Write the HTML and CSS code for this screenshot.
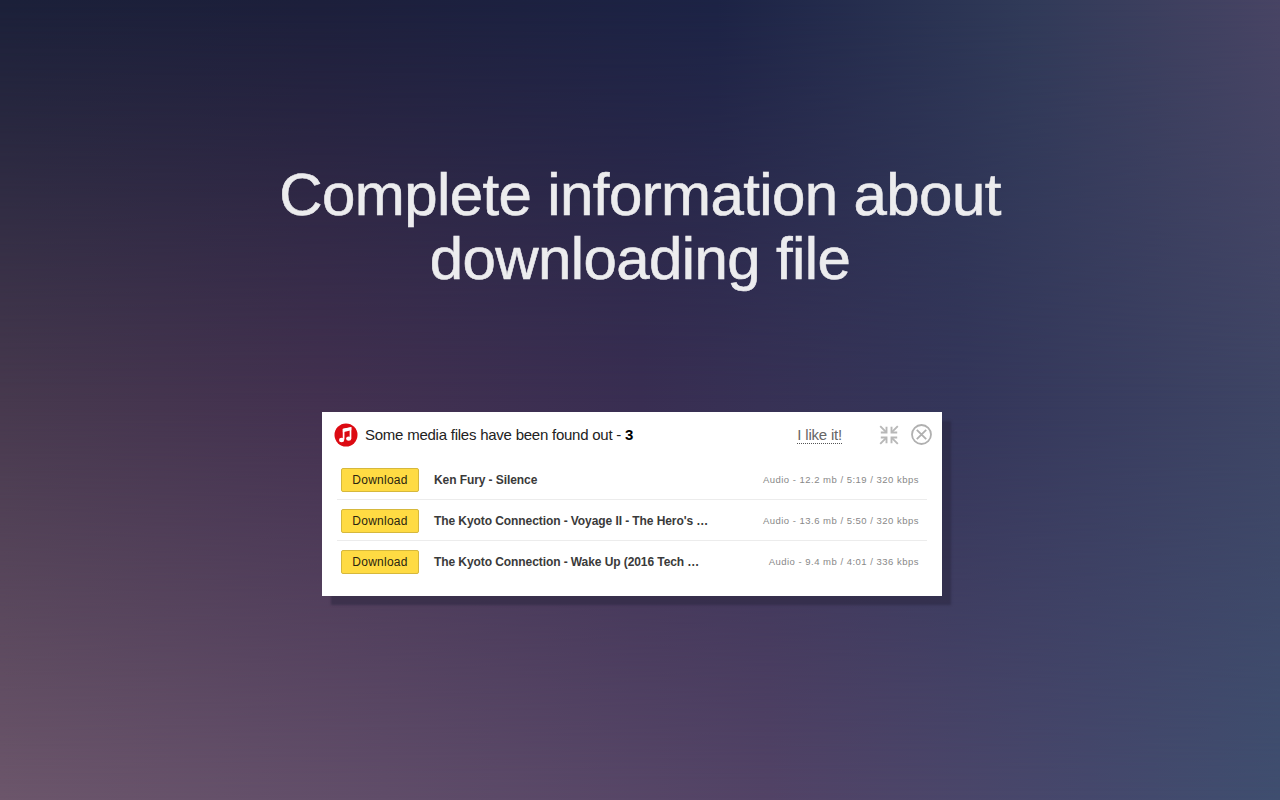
FILE: index.html
```html
<!DOCTYPE html>
<html>
<head>
    <meta charset="utf-8">
    <title>Media Downloader</title>
    <link rel="stylesheet" href="styles.css">
</head>
<body>
<h1>Complete information about<br>downloading file</h1>
<div class="popup">
    <div class="header">
        <svg class="logo" width="24" height="24" viewBox="0 0 24 24">
            <circle cx="12" cy="12" r="11.5" fill="#dc0a12"/>
            <path d="M9.6 16.5V6.8l6.9-1.6v10" fill="none" stroke="#fff" stroke-width="1.7"/>
            <path d="M8.8 5.8l8.5-1.7v3.2l-8.5 1.9z" fill="#fff"/>
            <ellipse cx="7.6" cy="17" rx="2.6" ry="2.2" fill="#fff"/>
            <ellipse cx="14.7" cy="15.6" rx="2.6" ry="2.2" fill="#fff"/>
        </svg>
        <span class="title">Some media files have been found out - <b>3</b></span>
        <a class="like">I like it!</a>
        <svg class="collapse" width="20" height="20" viewBox="0 0 20 20" fill="none" stroke="#b8b8b8" stroke-width="1.9">
            <path d="M1.2 1.2l6 6M18.8 1.2l-6 6M1.2 18.8l6-6M18.8 18.8l-6-6"/>
            <path d="M1.8 7.5h5.7V1.8M18.2 7.5h-5.7V1.8M1.8 12.5h5.7v5.7M18.2 12.5h-5.7v5.7"/>
        </svg>
        <svg class="close" width="22" height="22" viewBox="0 0 22 22" fill="none" stroke="#b0b0b0" stroke-width="1.8">
            <circle cx="11.5" cy="10.5" r="9.5"/>
            <path d="M6.8 5.8l9.4 9.4M16.2 5.8l-9.4 9.4"/>
        </svg>
    </div>
    <div class="list">
        <div class="item">
            <button>Download</button>
            <span class="name">Ken Fury - Silence</span>
            <span class="info">Audio - 12.2 mb / 5:19 / 320 kbps</span>
        </div>
        <div class="item">
            <button>Download</button>
            <span class="name">The Kyoto Connection - Voyage II - The Hero's …</span>
            <span class="info">Audio - 13.6 mb / 5:50 / 320 kbps</span>
        </div>
        <div class="item">
            <button>Download</button>
            <span class="name">The Kyoto Connection - Wake Up (2016 Tech …</span>
            <span class="info">Audio - 9.4 mb / 4:01 / 336 kbps</span>
        </div>
    </div>
</div>
</body>
</html>
```
FILE: styles.css
```css
body {
    margin: 0;
    height: 800px;
    overflow: hidden;
    font-family: Arial, "Liberation Sans", sans-serif;
    background: linear-gradient(90deg, #47394e 0%, #433150 25%, #392e52 50%, #34365a 75%, #3e4565 100%);
}
/* top and bottom tints fade into the middle one */
body::before,
body::after {
    content: "";
    position: absolute;
    left: 0;
    width: 100%;
    height: 400px;
    z-index: -1;
}
body::before {
    top: 0;
    background: linear-gradient(90deg, #1b2039 0%, #1c1f3b 25%, #1c2345 56%, #303a58 80%, #484464 100%);
    mask-image: linear-gradient(#000, transparent);
}
body::after {
    top: 400px;
    background: linear-gradient(90deg, #6c566b 0%, #604d69 30%, #524366 60%, #45486c 85%, #3f4e6f 100%);
    mask-image: linear-gradient(transparent, #000);
}
h1 {
    margin: 0;
    padding-top: 163px;
    height: 250px;
    box-sizing: border-box;
    margin-bottom: 162px;
    color: #ececee;
    font-size: 60px;
    line-height: 64px;
    font-weight: normal;
    letter-spacing: -0.6px;
    text-align: center;
    -webkit-text-stroke: 0.6px #ececee;
}
.popup {
    width: 620px;
    height: 184px;
    margin-left: 322px;
    background: #fff;
    box-shadow: 9px 9px 2px rgba(40, 35, 60, 0.5);
}
.header {
    display: flex;
    align-items: center;
    height: 46px;
    padding: 0 10px 0 12px;
    color: #222;
    font-size: 15px;
}
.title {
    margin-left: 7px;
    line-height: 17px;
    padding-bottom: 1px;
    letter-spacing: -0.24px;
}
.title b {
    color: #000;
}
.like {
    margin-left: auto;
    color: #666;
    line-height: 16px;
    letter-spacing: -0.2px;
    border-bottom: 1px dotted #555;
}
.collapse {
    margin-left: 37px;
}
.close {
    margin-left: 11px;
}
.list {
    padding: 1px 15px 0;
}
.item {
    display: flex;
    align-items: center;
    height: 38px;
    padding: 2px 8px 0 4px;
    border-bottom: 1px solid #ececec;
}
.item:last-child {
    border-bottom: none;
}
button {
    width: 78px;
    height: 24px;
    padding: 0;
    border: 1px solid #d6b83c;
    border-radius: 2px;
    background: #ffdb43;
    color: #2a2410;
    font-family: inherit;
    font-size: 12px;
    letter-spacing: 0.25px;
}
.name {
    margin-left: 15px;
    color: #3a3a3a;
    font-size: 12px;
    font-weight: bold;
    letter-spacing: -0.08px;
}
.info {
    margin-left: auto;
    padding-bottom: 1px;
    color: #888;
    font-size: 9.5px;
    letter-spacing: 0.49px;
}
```
